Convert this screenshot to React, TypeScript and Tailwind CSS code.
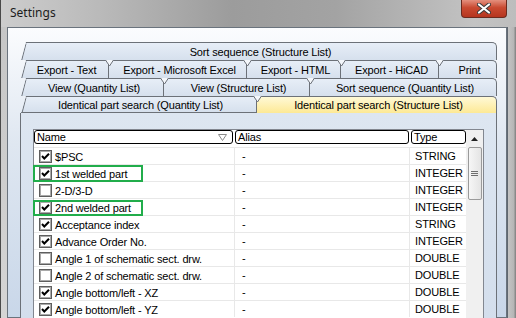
import React from "react";

type Tab = { label: string; w: number; selected?: boolean };

const tabRows: Tab[][] = [
  [{ label: "Sort sequence (Structure List)", w: 476 }],
  [
    { label: "Export - Text", w: 88 },
    { label: "Export - Microsoft Excel", w: 138 },
    { label: "Export - HTML", w: 94 },
    { label: "Export - HiCAD", w: 98 },
    { label: "Print", w: 58 },
  ],
  [
    { label: "View (Quantity List)", w: 143 },
    { label: "View (Structure List)", w: 146 },
    { label: "Sort sequence (Quantity List)", w: 187 },
  ],
  [
    { label: "Identical part search (Quantity List)", w: 236 },
    { label: "Identical part search (Structure List)", w: 240, selected: true },
  ],
];

const items = [
  { name: "$PSC", c: true, t: "STRING" },
  { name: "1st welded part", c: true, t: "INTEGER" },
  { name: "2-D/3-D", c: false, t: "INTEGER" },
  { name: "2nd welded part", c: true, t: "INTEGER" },
  { name: "Acceptance index", c: true, t: "STRING" },
  { name: "Advance Order No.", c: true, t: "INTEGER" },
  { name: "Angle 1 of schematic sect. drw.", c: false, t: "DOUBLE" },
  { name: "Angle 2 of schematic sect. drw.", c: false, t: "DOUBLE" },
  { name: "Angle bottom/left - XZ", c: true, t: "DOUBLE" },
  { name: "Angle bottom/left - YZ", c: true, t: "DOUBLE" },
];

function TabRow({ tabs, last }: { tabs: Tab[]; last: boolean }) {
  return (
    <div className={`flex ${last ? "h-[17px]" : "h-[18px]"} w-[476px] ml-[1px]`}>
      {tabs.map((t, i) => {
        const first = i === 0;
        const isLast = i === tabs.length - 1;
        return (
          <div
            key={t.label}
            style={{ width: t.w }}
            className={`relative flex items-center justify-center border-t border-[#6c7178] ${
              t.selected
                ? "bg-[linear-gradient(#fff9d6,#fde995)]"
                : "bg-[linear-gradient(#e7eef7,#d6e0ed)]"
            } ${isLast ? "border-r rounded-tr-[5px]" : "border-r"} ${
              last && !t.selected ? "border-b" : ""
            } ${first ? "[clip-path:polygon(5px_0,100%_0,100%_100%,0_100%)]" : ""}`}
          >
            {first && (
              <svg className="absolute left-0 top-0" width="6" height="18" viewBox="0 0 6 18">
                <line x1="0.5" y1="18" x2="5" y2="0.5" stroke="#6c7178" strokeWidth="1" />
              </svg>
            )}
            <span className="pl-[4px] leading-[12px] whitespace-nowrap">{t.label}</span>
          </div>
        );
      })}
    </div>
  );
}

function Forks({ tabs }: { tabs: Tab[] }) {
  let x = 0;
  const out: number[] = [];
  tabs.forEach((t, i) => {
    x += t.w;
    if (i < tabs.length - 1) out.push(x);
  });
  return (
    <>
      {out.map((b) => (
        <svg
          key={b}
          className="absolute top-0"
          style={{ left: b - 4 }}
          width="9"
          height="7"
          viewBox="0 0 9 7"
        >
          <polygon points="0.5,0 4.5,6 8.5,0" fill="#f4f7fb" />
          <line x1="0.5" y1="0" x2="4.5" y2="6" stroke="#6c7178" strokeWidth="1" />
          <line x1="8.5" y1="0" x2="4.5" y2="6" stroke="#6c7178" strokeWidth="1" />
        </svg>
      ))}
    </>
  );
}

function CheckBox({ on }: { on: boolean }) {
  return (
    <div className="w-[13px] h-[13px] shrink-0 border border-[#5e5e5e] bg-white shadow-[inset_0_0_0_1px_#a9a9a9] flex items-center justify-center">
      {on && (
        <svg width="11" height="11" viewBox="0 0 11 11">
          <path d="M2 5 L4.3 7.5 L9 2.8" fill="none" stroke="#000" strokeWidth="2" />
        </svg>
      )}
    </div>
  );
}

export default function App() {
  return (
    <div className="w-[516px] h-[318px] overflow-hidden relative flex flex-col font-['Liberation_Sans',Arial,sans-serif] text-[11px] tracking-[-0.15px] text-black bg-[linear-gradient(90deg,#cdcdcd_0%,#b9b9b9_20%,#9c9c9c_45%,#a3a3a3_65%,#c3c3c3_92%,#bdbdbd_100%)]">
      {/* title bar */}
      <div className="h-[27px] shrink-0 flex items-center pl-[9px] border-l border-[#4a4a4a]">
        <span className="font-['Noto_Sans',sans-serif] text-[12px] tracking-normal text-[#1c1c1c] pb-[1px]">
          Settings
        </span>
      </div>
      <div className="absolute right-[9px] top-0 w-[46px] h-[18px] rounded-b-[4px] border border-t-0 border-[#6b2a1e] bg-[linear-gradient(#e4907e,#c94a31_45%,#b5351f)] flex items-center justify-center">
        <svg width="14" height="11" viewBox="0 0 14 11">
          <path d="M2 1.5 L12 9.5 M12 1.5 L2 9.5" stroke="#3a3a3a" strokeWidth="4" strokeLinecap="round" />
          <path d="M2 1.5 L12 9.5 M12 1.5 L2 9.5" stroke="#ffffff" strokeWidth="2.2" strokeLinecap="round" />
        </svg>
      </div>

      {/* body */}
      <div className="flex-1 flex min-h-0 border-l border-[#4a4a4a]">
        <div className="w-[6px] shrink-0 bg-[linear-gradient(#c6c6c6,#d5d5d5)]" />
        <div className="w-[500px] shrink-0 border border-[#6a737d] bg-[linear-gradient(#fbfcfe,#dfe7f1_40%,#c9d7e9)] pt-[14px] pl-[12px] flex flex-col min-h-0">
          {/* tab control */}
          <div className="w-[477px] flex flex-col flex-1 min-h-0">
            <div className="relative">
              {tabRows.map((r, i) => (
                <div key={i} className="relative">
                  <TabRow tabs={r} last={i === tabRows.length - 1} />
                  <div className="absolute left-[1px] top-0">
                    <Forks tabs={r} />
                  </div>
                </div>
              ))}
            </div>
            <div className="flex-1 border-l border-r border-[#6c7178] bg-[linear-gradient(#dde6f1,#d3deec)] pt-[16px] pl-[12px]">
              {/* list */}
              <div className="relative w-[451px] h-[200px] border border-[#828790] bg-white flex">
                <div className="w-[432px] flex flex-col">
                  <div className="flex h-[14px] mb-[3px]">
                    <div className="relative w-[199px] mr-[2px] border border-black rounded-[3px] pl-[2px] leading-[12px]">
                      Name
                      <svg className="absolute right-[5px] top-[3px]" width="9" height="7" viewBox="0 0 9 7">
                        <path d="M0.5 0.5 H8.5 L4.5 6.5 Z" fill="none" stroke="#8a8a8a" strokeWidth="1" />
                      </svg>
                    </div>
                    <div className="w-[174px] mr-[2px] border border-black rounded-[3px] pl-[2px] leading-[12px]">
                      Alias
                    </div>
                    <div className="w-[55px] border border-black rounded-[3px] pl-[2px] leading-[12px]">
                      Type
                    </div>
                  </div>
                  {items.map((it) => (
                    <div key={it.name} className="flex h-[17px] shrink-0 border-t border-[#e8e8e8]">
                      <div className="w-[201px] border-r border-[#e8e8e8] flex items-center pl-[5px] gap-[3px] pt-[1px]">
                        <CheckBox on={it.c} />
                        <span className="whitespace-nowrap leading-[12px]">{it.name}</span>
                      </div>
                      <div className="w-[175px] border-r border-[#e8e8e8] pl-[7px] pt-[2px] leading-[12px]">-</div>
                      <div className="w-[56px] pl-[5px] pt-[2px] leading-[12px]">{it.t}</div>
                    </div>
                  ))}
                </div>
                {/* scrollbar */}
                <div className="w-[17px] bg-[#f0f0f0] flex flex-col items-center">
                  <div className="h-[17px] flex items-center justify-center">
                    <svg width="7" height="4" viewBox="0 0 7 4">
                      <polygon points="0,4 7,4 3.5,0" fill="#222" />
                    </svg>
                  </div>
                  <div className="w-[14px] h-[53px] border border-[#9a9a9a] rounded-[2px] bg-[linear-gradient(90deg,#f6f6f6,#e4e4e4)] flex flex-col items-center justify-center gap-[1px]">
                    <div className="w-[7px] h-[1px] bg-[#6e6e6e]" />
                    <div className="w-[7px] h-[1px] bg-[#6e6e6e]" />
                    <div className="w-[7px] h-[1px] bg-[#6e6e6e]" />
                  </div>
                </div>
                {/* highlight annotations */}
                <div className="absolute left-[-1px] top-[35px] w-[110px] h-[17px] border-2 border-[#21ad4b]" />
                <div className="absolute left-[-1px] top-[70px] w-[110px] h-[16px] border-2 border-[#21ad4b]" />
              </div>
            </div>
          </div>
        </div>
        <div className="flex-1 border-l border-[#5f6770] bg-[linear-gradient(90deg,#c4c4c4,#b6b6b6_70%,#7d7d7d)]" />
      </div>
    </div>
  );
}
